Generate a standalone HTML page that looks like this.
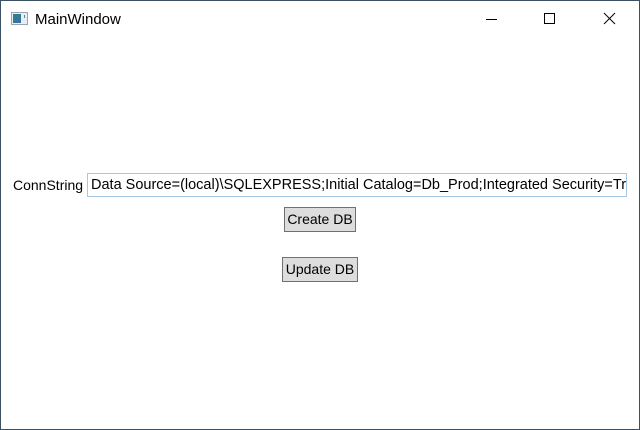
<!DOCTYPE html>
<html><head><meta charset="utf-8"><style>
html,body{margin:0;padding:0;}
body{width:640px;height:430px;position:relative;overflow:hidden;background:#fff;font-family:"Liberation Sans",sans-serif;}
.frame{position:absolute;left:0;top:0;width:638px;height:428px;border:1px solid #3c5064;}
.abs{position:absolute;}
.title{left:35px;top:11px;font-size:15px;color:#000;}
.lbl{left:13px;top:177px;font-size:14px;color:#000;}
.tb{left:87px;top:173px;width:538px;height:22px;border:1px solid #a8c8e8;overflow:hidden;white-space:nowrap;}
.tb span{position:absolute;left:3px;top:3px;font-size:14.5px;}
.btn{background:#dddddd;border:1px solid #707070;font-size:14px;text-align:center;line-height:23px;box-sizing:border-box;white-space:nowrap;}
</style></head><body>
<div class="frame"></div>
<svg class="abs" style="left:11px;top:12px" width="18" height="14" viewBox="0 0 18 14">
<rect x="0.5" y="0.5" width="16" height="12" fill="#e8eef2" stroke="#9aa4ac"/>
<defs><linearGradient id="g" x1="0" y1="0" x2="1" y2="1"><stop offset="0" stop-color="#2a8a7a"/><stop offset="1" stop-color="#3a6ab0"/></linearGradient></defs>
<rect x="2" y="2" width="8" height="9" fill="url(#g)"/>
<rect x="13" y="3" width="1" height="3" fill="#4a8a9a"/>
</svg>
<div class="abs title">MainWindow</div>
<svg class="abs" style="left:484px;top:12px" width="140" height="14">
<line x1="2" y1="7.5" x2="13" y2="7.5" stroke="#000" stroke-width="1"/>
<rect x="60.5" y="1.5" width="10" height="10" fill="none" stroke="#000"/>
<line x1="120" y1="1" x2="131" y2="12" stroke="#000"/>
<line x1="131" y1="1" x2="120" y2="12" stroke="#000"/>
</svg>
<div class="abs lbl">ConnString</div>
<div class="abs tb"><span>Data Source=(local)\SQLEXPRESS;Initial Catalog=Db_Prod;Integrated Security=True</span></div>
<div class="abs btn" style="left:284px;top:207px;width:72px;height:25px;">Create DB</div>
<div class="abs btn" style="left:282px;top:257px;width:76px;height:25px;">Update DB</div>
</body></html>
